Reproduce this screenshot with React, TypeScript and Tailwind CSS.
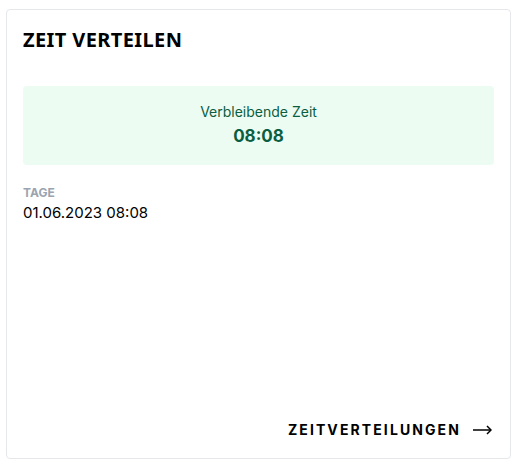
import React from 'react'

const App = () => {
	return (
		<div className="w-[518px] h-[463px] bg-white pt-[9px] pl-[6px] font-['Inter',sans-serif]">
			<div className="w-[505px] h-[450px] border border-[#e5e7eb] rounded-[4px] px-4 pt-4 pb-4 flex flex-col">
				<h2 className="font-['Noto_Sans',sans-serif] text-[20px] leading-[28px] font-bold tracking-[0.02em] text-black">
					ZEIT VERTEILEN
				</h2>
				<div className="mt-[32px] h-[79px] rounded-[4px] bg-[#ecfcf3] flex flex-col items-center pt-[16px] gap-[2px]">
					<span className="text-[14px] leading-5 text-[#0b5e3f]">
						Verbleibende Zeit
					</span>
					<span className="text-[17px] leading-6 font-bold text-[#0b5e3f]">
						08:08
					</span>
				</div>
				<div className="mt-[20px] flex flex-col">
					<span className="text-[12px] leading-4 font-bold text-[#9ca3af]">
						TAGE
					</span>
					<span className="text-[15px] leading-6 text-black">
						01.06.2023 08:08
					</span>
				</div>
				<div className="mt-auto flex justify-end items-center gap-3 pr-[2px] mb-[2px]">
					<span className="text-[14px] leading-5 font-bold tracking-[0.15em] text-black">
						ZEITVERTEILUNGEN
					</span>
					<svg width="19" height="10" viewBox="0 0 19 10" fill="none" stroke="black" strokeWidth="1.5">
						<path d="M0 5H18" />
						<path d="M14 1L18 5L14 9" />
					</svg>
				</div>
			</div>
		</div>
	)
}

export default App
